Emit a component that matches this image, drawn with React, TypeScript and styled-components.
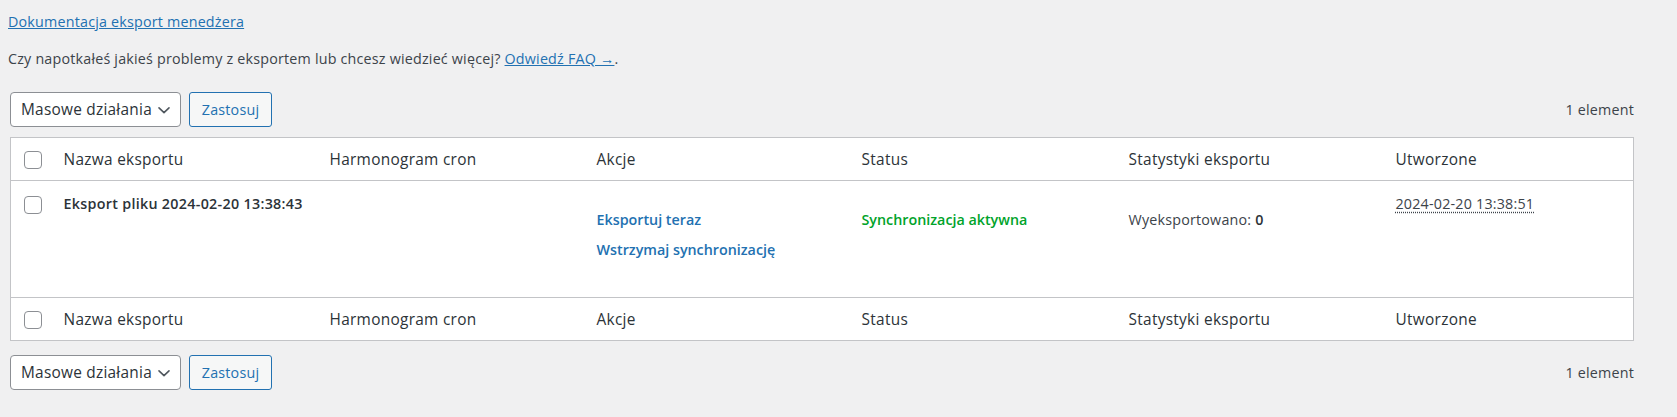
import styled, { createGlobalStyle } from "styled-components";

const GlobalStyle = createGlobalStyle`
    html, body {
        margin: 0;
        padding: 0;
        background: #f0f0f1;
    }

    body {
        font-family: "Open Sans", Roboto, "Liberation Sans", sans-serif;
        font-size: 14.3px;
        letter-spacing: 0.2px;
        color: #3c434a;
    }
`;

const columns = [
    "Nazwa eksportu",
    "Harmonogram cron",
    "Akcje",
    "Status",
    "Statystyki eksportu",
    "Utworzone",
];

function Chevron() {
    return (
        <svg width="14" height="14" viewBox="0 0 14 14" fill="none">
            <path
                d="M2 4.8 7 9.6l5-4.8"
                stroke="#50575e"
                strokeWidth="1.6"
                strokeLinecap="round"
                strokeLinejoin="round"
            />
        </svg>
    );
}

function TableNav({ $bottom }: { $bottom?: boolean }) {
    return (
        <Nav $bottom={$bottom}>
            <Actions>
                <BulkSelect>
                    <span>Masowe działania</span>
                    <Chevron />
                </BulkSelect>
                <ApplyButton>Zastosuj</ApplyButton>
            </Actions>
            <Count>1 element</Count>
        </Nav>
    );
}

function HeaderRow() {
    return (
        <tr>
            <HeadCell $check>
                <Checkbox type="checkbox" />
            </HeadCell>
            {columns.map((name) => (
                <HeadCell key={name}>{name}</HeadCell>
            ))}
        </tr>
    );
}

export default function App() {
    return (
        <Page>
            <GlobalStyle />
            <DocLink href="#">Dokumentacja eksport menedżera</DocLink>
            <Intro>
                Czy napotkałeś jakieś problemy z eksportem lub chcesz wiedzieć
                więcej? <TextLink href="#">Odwiedź FAQ →</TextLink>.
            </Intro>

            <TableNav />

            <ListTable>
                <colgroup>
                    <col style={{ width: 44 }} />
                    <col style={{ width: 266 }} />
                    <col style={{ width: 267 }} />
                    <col style={{ width: 265 }} />
                    <col style={{ width: 267 }} />
                    <col style={{ width: 267 }} />
                    <col />
                </colgroup>
                <thead>
                    <HeaderRow />
                </thead>
                <tbody>
                    <BodyRow>
                        <Cell $check>
                            <Checkbox type="checkbox" />
                        </Cell>
                        <Cell>
                            <Title>Eksport pliku 2024-02-20 13:38:43</Title>
                        </Cell>
                        <Cell />
                        <Cell $offset={16}>
                            <LinkStack>
                                <RowAction href="#">Eksportuj teraz</RowAction>
                                <RowAction href="#">
                                    Wstrzymaj synchronizację
                                </RowAction>
                            </LinkStack>
                        </Cell>
                        <Cell $offset={16}>
                            <StatusText>Synchronizacja aktywna</StatusText>
                        </Cell>
                        <Cell $offset={16}>
                            Wyeksportowano: <strong>0</strong>
                        </Cell>
                        <Cell>
                            <DateAbbr title="2024-02-20 13:38:51">
                                2024-02-20 13:38:51
                            </DateAbbr>
                        </Cell>
                    </BodyRow>
                </tbody>
                <tfoot>
                    <HeaderRow />
                </tfoot>
            </ListTable>

            <TableNav $bottom />
        </Page>
    );
}

const Page = styled.div`
    display: flex;
    flex-direction: column;
    padding: 11px 43px 30px 10px;
`;

const DocLink = styled.a`
    align-self: flex-start;
    margin-left: -2px;
    color: #2271b1;
    text-decoration: underline;
    line-height: 21px;
`;

const Intro = styled.p`
    margin: 16px 0 0 -2px;
    line-height: 21px;
    color: #3c434a;
`;

const TextLink = styled.a`
    color: #2271b1;
    text-decoration: underline;
`;

const Nav = styled.div<{ $bottom?: boolean }>`
    display: flex;
    align-items: center;
    justify-content: space-between;
    margin: ${({ $bottom }) => ($bottom ? "14px 0 0" : "23px 0 10px")};
`;

const Actions = styled.div`
    display: flex;
    gap: 8px;
`;

const BulkSelect = styled.div`
    display: flex;
    align-items: center;
    justify-content: space-between;
    box-sizing: border-box;
    width: 171px;
    height: 35px;
    padding: 0 9px 0 10px;
    border: 1px solid #8c8f94;
    border-radius: 4px;
    background: #fff;
    color: #2c3338;
    font-size: 15.4px;
    letter-spacing: 0.25px;
`;

const ApplyButton = styled.button`
    box-sizing: border-box;
    width: 83px;
    height: 35px;
    padding: 0 10px;
    border: 1px solid #2271b1;
    border-radius: 3px;
    background: #f6f7f7;
    color: #2271b1;
    font-family: inherit;
    font-size: 14.3px;
    letter-spacing: 0.2px;
`;

const Count = styled.span`
    color: #3c434a;
`;

const ListTable = styled.table`
    width: 100%;
    table-layout: fixed;
    border-collapse: collapse;
    border: 1px solid #c3c4c7;
    background: #fff;

    thead tr {
        border-bottom: 1px solid #c3c4c7;
    }

    tfoot tr {
        border-top: 1px solid #c3c4c7;
    }
`;

const HeadCell = styled.th<{ $check?: boolean }>`
    height: 41px;
    padding: ${({ $check }) => ($check ? "1px 0 0 13px" : "1px 9px 0")};
    text-align: left;
    vertical-align: middle;
    font-weight: 400;
    font-size: 15.4px;
    letter-spacing: 0.3px;
    color: #2c3338;
    line-height: 20px;

    input {
        display: block;
    }
`;

const BodyRow = styled.tr`
    height: 117px;
`;

const Cell = styled.td<{ $check?: boolean; $offset?: number }>`
    vertical-align: top;
    padding: ${({ $check, $offset }) =>
        $check ? "15px 0 0 13px" : `${12 + ($offset ?? 0)}px 9px 10px`};
    line-height: 21px;
    color: #3c434a;

    strong {
        color: #2c3338;
        font-weight: 600;
    }

    input {
        display: block;
    }
`;

const Checkbox = styled.input`
    appearance: none;
    box-sizing: border-box;
    width: 18px;
    height: 18px;
    margin: 0;
    border: 1px solid #8c8f94;
    border-radius: 4px;
    background: #fff;
`;

const Title = styled.strong`
    display: block;
    font-weight: 600;
    letter-spacing: 0.3px;
    color: #50575e;
`;

const LinkStack = styled.div`
    display: flex;
    flex-direction: column;
    align-items: flex-start;
    gap: 9px;
`;

const RowAction = styled.a`
    color: #2271b1;
    font-weight: 600;
    letter-spacing: 0;
    text-decoration: none;
`;

const StatusText = styled.span`
    color: #00a32a;
    font-weight: 600;
    letter-spacing: 0;
`;

const DateAbbr = styled.abbr`
    text-decoration: underline dotted;
    text-underline-offset: 3px;
    color: #3c434a;
`;
